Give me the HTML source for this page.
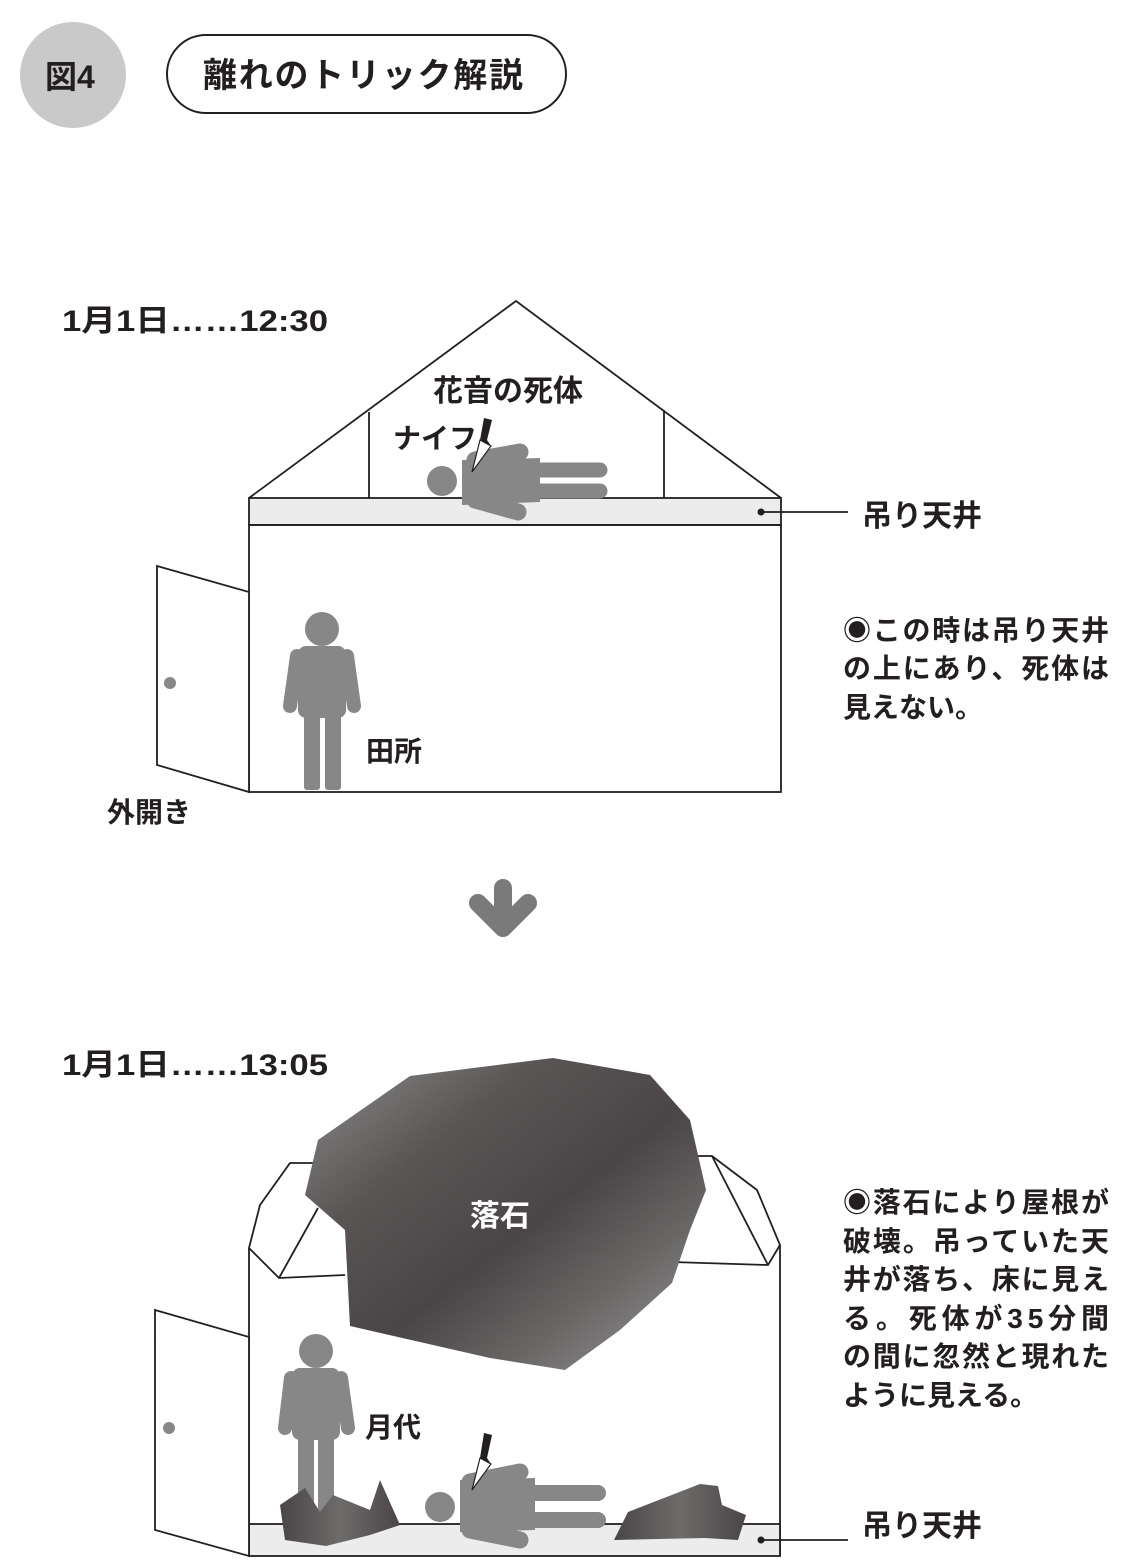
<!DOCTYPE html>
<html><head><meta charset="utf-8"><style>
html,body{margin:0;padding:0;background:#fff;}
svg{display:block;}
text{font-family:"Liberation Sans","Noto Sans CJK JP",sans-serif;font-weight:bold;fill:#231f20;}
</style></head><body>
<svg width="1131" height="1561" viewBox="0 0 1131 1561" xmlns="http://www.w3.org/2000/svg">
<defs>
<linearGradient id="rock" x1="0" y1="0" x2="1" y2="1">
<stop offset="0" stop-color="#8c8c8c"/>
<stop offset="0.3" stop-color="#5a5555"/>
<stop offset="0.55" stop-color="#4a4546"/>
<stop offset="0.75" stop-color="#6a6767"/>
<stop offset="1" stop-color="#9a9a9a"/>
</linearGradient>
<linearGradient id="rub" x1="0" y1="0" x2="1" y2="0">
<stop offset="0" stop-color="#4a4546"/><stop offset="0.5" stop-color="#6e6b6b"/><stop offset="1" stop-color="#4a4546"/>
</linearGradient>
</defs>

<circle cx="73" cy="75" r="53" fill="#c9c9c9"/>
<text x="45" y="88" font-size="32">図4</text>
<rect x="167" y="35" width="399" height="78" rx="39" fill="#fff" stroke="#231f20" stroke-width="2"/>
<text x="203" y="87" font-size="34" textLength="320">離れのトリック解説</text>

<text x="62" y="331" font-size="30" textLength="266" lengthAdjust="spacingAndGlyphs">1月1日……12:30</text>
<g fill="none" stroke="#231f20" stroke-width="1.8">
<polyline points="249,498 516,301 781,498"/>
<line x1="369" y1="412" x2="369" y2="498"/>
<line x1="664" y1="410" x2="664" y2="498"/>
<rect x="249" y="498" width="532" height="27" fill="#ececec"/>
<rect x="249" y="525" width="532" height="267"/>
<polygon points="157,566 249,592 249,792 157,765" fill="#fff"/>
<line x1="761" y1="512" x2="848" y2="512"/>
</g>
<circle cx="761" cy="512" r="3.5" fill="#231f20"/>
<circle cx="170" cy="683" r="6" fill="#888"/>
<text x="433" y="401" font-size="30">花音の死体</text>
<text x="393" y="448" font-size="28">ナイフ</text>
<g fill="#878787" stroke="#878787" stroke-linecap="round">
<circle cx="442" cy="481" r="15" stroke="none"/>
<polygon points="462,460 540,458 540,502 462,505" stroke="none"/>
<line x1="475" y1="460" x2="520" y2="452" stroke-width="17"/>
<line x1="475" y1="500" x2="518" y2="512" stroke-width="17"/>
<line x1="535" y1="470" x2="600" y2="470" stroke-width="15"/>
<line x1="535" y1="491" x2="600" y2="491" stroke-width="15"/>
</g>
<polygon points="484,418 492,420 487,440 491,446 472,472 480,440" fill="#231f20"/>
<polygon points="480,440 491,446 472,472" fill="#fff" stroke="#231f20" stroke-width="1.2"/>
<g fill="#878787" stroke="#878787" stroke-linecap="round">
<circle cx="322" cy="629" r="17" stroke="none"/>
<rect x="298" y="646" width="48" height="72" rx="8" stroke="none"/>
<line x1="297" y1="656" x2="290" y2="706" stroke-width="14"/>
<line x1="347" y1="656" x2="354" y2="706" stroke-width="14"/>
<rect x="304" y="712" width="16" height="78" rx="3" stroke="none"/>
<rect x="325" y="712" width="16" height="78" rx="3" stroke="none"/>
</g>
<text x="366" y="761" font-size="28">田所</text>
<text x="107" y="822" font-size="28">外開き</text>
<text x="862" y="526" font-size="30">吊り天井</text>
<text x="843" y="640" font-size="28" textLength="266">◉この時は吊り天井</text>
<text x="843" y="678" font-size="28" textLength="266">の上にあり、死体は</text>
<text x="843" y="717" font-size="28">見えない。</text>

<polyline points="478,903 503,928 528,903" fill="none" stroke="#7a7a7a" stroke-width="18" stroke-linecap="round" stroke-linejoin="round"/>
<line x1="503" y1="888" x2="503" y2="925" stroke="#7a7a7a" stroke-width="18" stroke-linecap="round"/>

<text x="62" y="1075" font-size="30" textLength="266" lengthAdjust="spacingAndGlyphs">1月1日……13:05</text>
<g fill="none" stroke="#231f20" stroke-width="1.8">
<polyline points="318,1163 290,1163 260,1205 249,1248 279,1278 345,1275"/>
<line x1="279" y1="1278" x2="318" y2="1208"/>
<polyline points="698,1156 712,1156 757,1190 780,1245 768,1265 672,1262"/>
<line x1="712" y1="1156" x2="768" y2="1265"/>
<line x1="249" y1="1248" x2="249" y2="1556"/>
<line x1="780" y1="1245" x2="780" y2="1556"/>
<rect x="249" y="1524" width="531" height="32" fill="#ececec"/>
<polygon points="155,1310 249,1337 249,1556 155,1530" fill="#fff"/>
<line x1="761" y1="1540" x2="848" y2="1540"/>
</g>
<circle cx="761" cy="1540" r="3.5" fill="#231f20"/>
<circle cx="169" cy="1428" r="6" fill="#888"/>
<polygon points="410,1076 553,1058 650,1075 690,1120 706,1190 690,1230 672,1283 620,1330 565,1370 490,1358 350,1326 345,1230 305,1195 318,1140" fill="url(#rock)"/>
<text x="470" y="1226" font-size="30" style="fill:#fff">落石</text>
<g fill="#878787" stroke="#878787" stroke-linecap="round">
<circle cx="316" cy="1351" r="17" stroke="none"/>
<rect x="292" y="1368" width="48" height="72" rx="8" stroke="none"/>
<line x1="291" y1="1378" x2="285" y2="1428" stroke-width="14"/>
<line x1="341" y1="1378" x2="348" y2="1428" stroke-width="14"/>
<rect x="298" y="1434" width="16" height="80" rx="3" stroke="none"/>
<rect x="318" y="1434" width="16" height="80" rx="3" stroke="none"/>
</g>
<text x="365" y="1437" font-size="28">月代</text>
<polygon points="280,1505 305,1488 320,1512 333,1495 370,1510 380,1480 400,1525 370,1535 326,1546 285,1540" fill="url(#rub)"/>
<polygon points="628,1512 700,1484 718,1486 722,1505 746,1515 738,1540 705,1538 614,1540" fill="url(#rub)"/>
<g fill="#878787" stroke="#878787" stroke-linecap="round">
<circle cx="440" cy="1507" r="15" stroke="none"/>
<polygon points="460,1480 535,1478 535,1530 460,1532" stroke="none"/>
<line x1="470" y1="1482" x2="520" y2="1472" stroke-width="17"/>
<line x1="470" y1="1530" x2="520" y2="1540" stroke-width="17"/>
<line x1="535" y1="1493" x2="598" y2="1493" stroke-width="16"/>
<line x1="535" y1="1520" x2="598" y2="1520" stroke-width="16"/>
</g>
<polygon points="484,1433 492,1435 487,1458 491,1464 472,1490 480,1458" fill="#231f20"/>
<polygon points="480,1458 491,1464 472,1490" fill="#fff" stroke="#231f20" stroke-width="1.2"/>
<text x="862" y="1536" font-size="30">吊り天井</text>
<text x="843" y="1212" font-size="28" textLength="266">◉落石により屋根が</text>
<text x="843" y="1251" font-size="28" textLength="266">破壊。吊っていた天</text>
<text x="843" y="1289" font-size="28" textLength="266">井が落ち、床に見え</text>
<text x="843" y="1328" font-size="28" textLength="266">る。死体が35分間</text>
<text x="843" y="1366" font-size="28" textLength="266">の間に忽然と現れた</text>
<text x="843" y="1405" font-size="28">ように見える。</text>
</svg>
</body></html>
